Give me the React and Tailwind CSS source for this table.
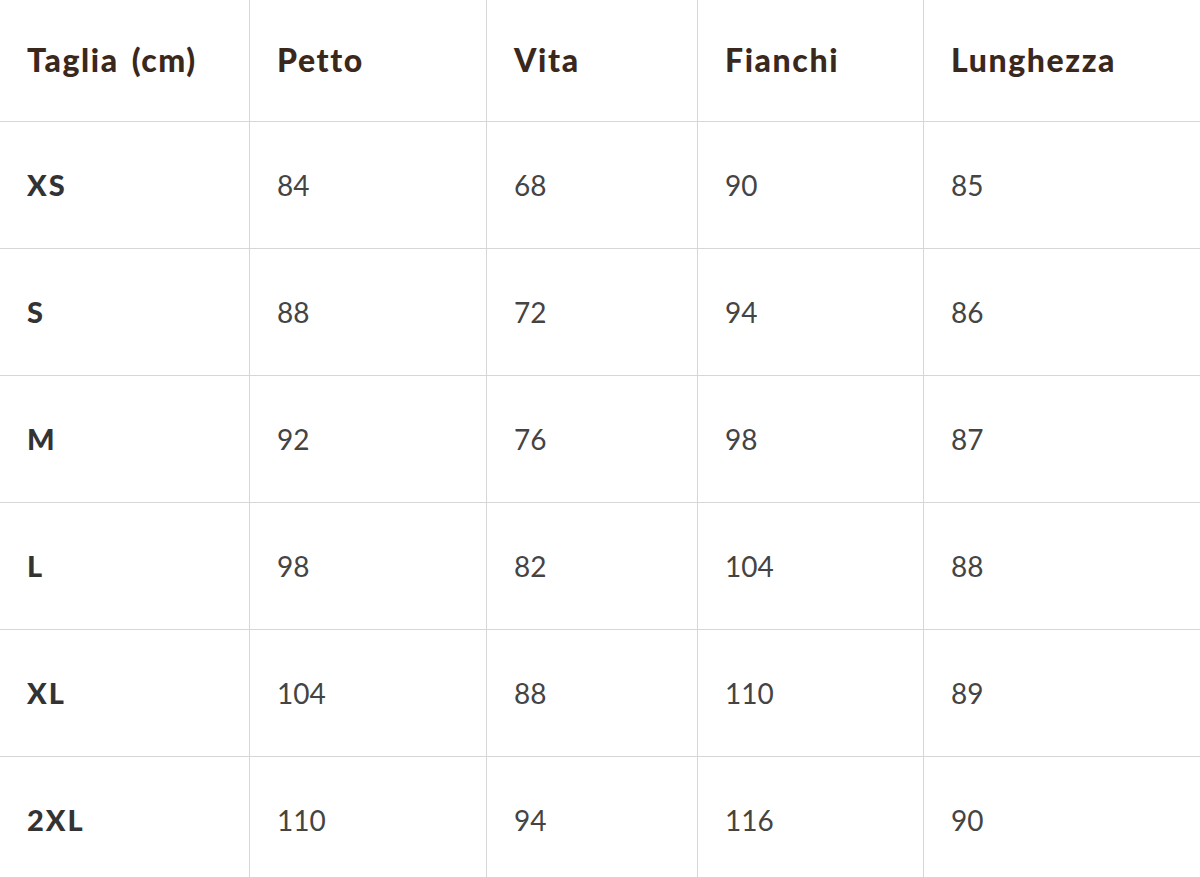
import React from "react";

const headers = ["Taglia (cm)", "Petto", "Vita", "Fianchi", "Lunghezza"];
const rows = [
  ["XS", "84", "68", "90", "85"],
  ["S", "88", "72", "94", "86"],
  ["M", "92", "76", "98", "87"],
  ["L", "98", "82", "104", "88"],
  ["XL", "104", "88", "110", "89"],
  ["2XL", "110", "94", "116", "90"],
];

const colBorder = ["border-r", "border-r", "border-r", "border-r", ""];

export default function App() {
  return (
    <div
      className="w-[1200px] h-[877px] overflow-hidden bg-white"
      style={{ fontFamily: "Lato, 'Noto Sans', sans-serif" }}
    >
      <div className="grid grid-cols-[250px_237px_211px_226px_1fr]">
        {headers.map((h, i) => (
          <div
            key={h}
            className={`h-[122px] flex items-center pl-[27px] pb-[2px] border-b border-[#d6d6d6] ${colBorder[i]} text-[32px] font-black text-[#3a281c] tracking-[1.6px]`}
          >
            <span className="whitespace-nowrap">
              {h.split(" ").map((w, j) => (
                <span key={j} className={j > 0 ? "ml-[13px]" : ""}>
                  {w}
                </span>
              ))}
            </span>
          </div>
        ))}
        {rows.map((r) =>
          r.map((c, i) => (
            <div
              key={r[0] + i}
              className={`h-[127px] flex items-center pl-[27px] border-b border-[#d6d6d6] ${colBorder[i]} ${
                i === 0
                  ? "text-[29px] font-black text-[#333333] tracking-[2px]"
                  : "text-[28px] font-normal text-[#444444]"
              }`}
            >
              {c}
            </div>
          ))
        )}
      </div>
    </div>
  );
}
